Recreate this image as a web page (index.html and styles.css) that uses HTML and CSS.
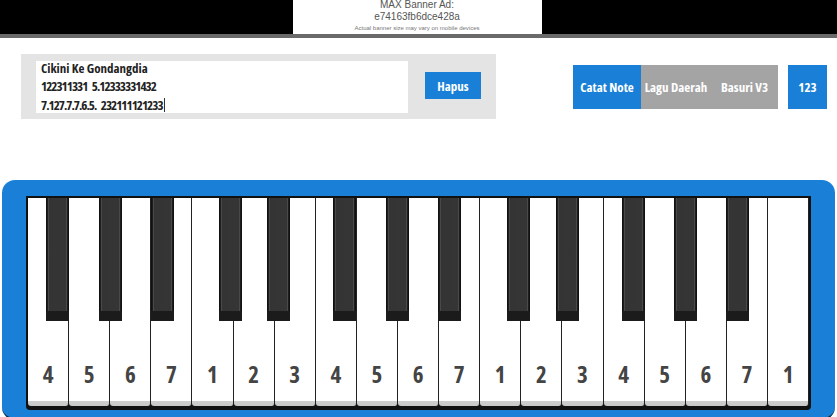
FILE: index.html
```html
<!DOCTYPE html>
<html lang="id">

<head>
	<meta charset="UTF-8">
	<meta name="viewport" content="width=device-width, initial-scale=1.0">
	<title>Pianika</title>
	<link rel="stylesheet" href="styles.css">
</head>

<body>
	<div class="ad-bar">
		<div class="ad-box">
			<div class="ad-title">MAX Banner Ad:</div>
			<div class="ad-id">e74163fb6dce428a</div>
			<div class="ad-note">Actual banner size may vary on mobile devices</div>
		</div>
	</div>

	<div class="controls">
		<div class="note-panel">
			<div class="note-text">
				<div class="note-lines">Cikini Ke Gondangdia<br><span class="nums">122311331 5.12333331432</span><br><span class="nums">7.127.7.7.6.5. 232111121233</span><span class="caret"></span></div>
			</div>
			<button class="btn btn-blue hapus">Hapus</button>
		</div>

		<div class="tabs">
			<div class="tab-group">
				<button class="btn btn-blue tab">Catat Note</button>
				<button class="btn btn-gray tab">Lagu Daerah</button>
				<button class="btn btn-gray tab">Basuri V3</button>
			</div>
			<button class="btn btn-blue num">123</button>
		</div>
	</div>

	<div class="piano">
		<div class="keyboard">
			<div class="white"><span>4</span></div>
			<div class="white"><span>5</span></div>
			<div class="white"><span>6</span></div>
			<div class="white"><span>7</span></div>
			<div class="white"><span>1</span></div>
			<div class="white"><span>2</span></div>
			<div class="white"><span>3</span></div>
			<div class="white"><span>4</span></div>
			<div class="white"><span>5</span></div>
			<div class="white"><span>6</span></div>
			<div class="white"><span>7</span></div>
			<div class="white"><span>1</span></div>
			<div class="white"><span>2</span></div>
			<div class="white"><span>3</span></div>
			<div class="white"><span>4</span></div>
			<div class="white"><span>5</span></div>
			<div class="white"><span>6</span></div>
			<div class="white"><span>7</span></div>
			<div class="white"><span>1</span></div>

			<!-- tuts hitam -->
			<div class="black" style="left: 18px"></div>
			<div class="black" style="left: 71px"></div>
			<div class="black" style="left: 123px"></div>
			<div class="black" style="left: 191px"></div>
			<div class="black" style="left: 239px"></div>
			<div class="black" style="left: 305px"></div>
			<div class="black" style="left: 358px"></div>
			<div class="black" style="left: 410px"></div>
			<div class="black" style="left: 479px"></div>
			<div class="black" style="left: 528px"></div>
			<div class="black" style="left: 594px"></div>
			<div class="black" style="left: 646px"></div>
			<div class="black" style="left: 698px"></div>
		</div>
	</div>
</body>

</html>
```

FILE: styles.css
```css
* {
	box-sizing: border-box;
}

body {
	margin: 0;
	width: 837px;
	height: 417px;
	overflow: hidden;
	background: #fff;
	font-family: "Open Sans", "DejaVu Sans Condensed", sans-serif;
	font-stretch: 75%;
}

/* iklan atas */
.ad-bar {
	height: 38px;
	background: #000;
	border-bottom: 4px solid #6a6a6a;
	display: flex;
	justify-content: center;
}

.ad-box {
	width: 249px;
	margin-left: -3px;
	background: #fff;
	text-align: center;
	font-family: "Liberation Sans", Arial, sans-serif;
	font-stretch: normal;
	color: #555;
	line-height: 1;
	white-space: nowrap;
}

.ad-title {
	font-size: 10px;
	margin-top: 0;
}

.ad-id {
	font-size: 10px;
	margin-top: 2px;
}

.ad-note {
	font-size: 6px;
	margin-top: 3px;
	color: #777;
}

/* kontrol */
.controls {
	display: flex;
	justify-content: space-between;
	padding: 16px 10px 0 21px;
	height: 142px;
}

.note-panel {
	width: 475px;
	height: 65px;
	background: #e4e4e4;
	display: flex;
	align-items: center;
	padding: 0 15px;
}

.note-text {
	width: 372px;
	height: 52px;
	background: #fff;
	padding: 0 5px;
	font-size: 13px;
	font-weight: 700;
	line-height: 18.5px;
	color: #222;
	white-space: nowrap;
}

.note-lines {
	margin-top: -2px;
}

.nums {
	letter-spacing: -0.95px;
	word-spacing: 3px;
}

.caret {
	display: inline-block;
	width: 1px;
	height: 14px;
	margin-left: 1px;
	background: #333;
	vertical-align: -2px;
}

.btn {
	border: none;
	color: #fff;
	font-family: inherit;
	font-stretch: inherit;
	font-weight: 700;
	font-size: 13px;
	padding: 0;
	white-space: nowrap;
	cursor: pointer;
}

.btn-blue {
	background: #1a7fd6;
}

.btn-gray {
	background: #a5a4a5;
}

.hapus {
	width: 56px;
	height: 27px;
	margin-left: 17px;
	margin-top: -2px;
}

.tabs {
	display: flex;
	gap: 10px;
	margin-top: 11px;
	align-items: flex-start;
}

.tab-group {
	display: flex;
}

.tab {
	height: 44px;
}

.tab-group .tab:nth-child(1) {
	width: 68px;
}

.tab-group .tab:nth-child(2) {
	width: 70px;
}

.tab-group .tab:nth-child(3) {
	width: 67px;
}

.num {
	width: 39px;
	height: 44px;
}

/* piano */
.piano {
	margin: 0 2px;
	height: 240px;
	background: #1a7fd6;
	border-radius: 13px;
	padding: 16px 24px 5px 24px;
	border-bottom: 2px solid #0c2740;
}

.keyboard {
	position: relative;
	display: flex;
	height: 214px;
	border: 2px solid #111;
	border-bottom-width: 4px;
	background: #111;
	border-radius: 0 0 4px 4px;
}

.white {
	flex: 1;
	background: linear-gradient(#fff 0, #fff 97.5%, #cfcfcf 97.5%, #c8c8c8 100%);
	border-right: 1px solid #222;
	border-radius: 0 0 3px 3px;
	display: flex;
	align-items: flex-end;
	justify-content: center;
	padding-bottom: 20px;
}

.white:last-child {
	border-right: none;
}

.white span {
	font-size: 23px;
	font-weight: 700;
	color: #444;
	line-height: 1;
}

.black {
	position: absolute;
	top: 0;
	width: 23px;
	height: 123px;
	background: linear-gradient(90deg, #111 0, #111 6%, #555 9%, #343434 14%, #353535 86%, #555 91%, #111 94%, #111 100%);
	border-bottom: 10px solid #1b1b1b;
}
```
